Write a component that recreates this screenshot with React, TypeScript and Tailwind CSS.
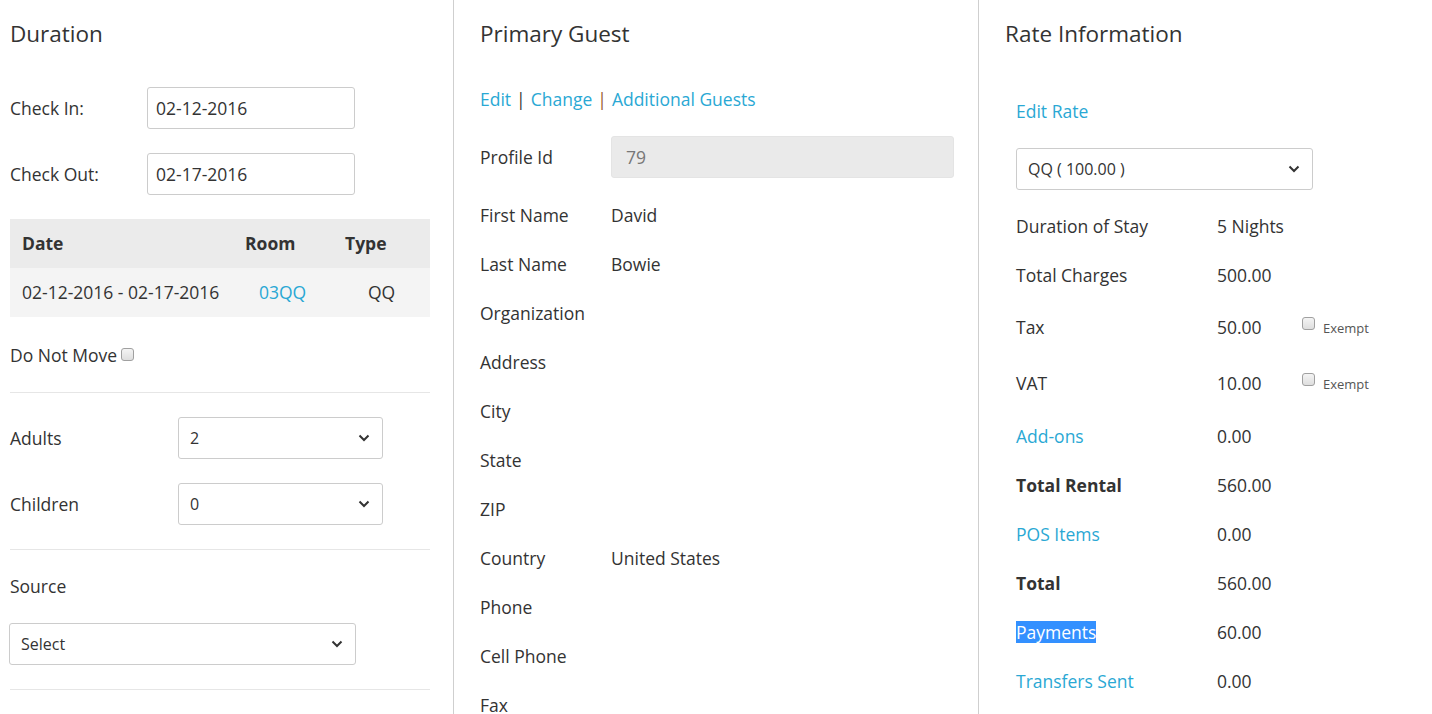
import React from 'react';

const Chevron = () => (
  <svg width="12" height="8" viewBox="0 0 12 8" className="shrink-0">
    <path d="M1.5 1.5l4.5 4.5 4.5-4.5" fill="none" stroke="#333" strokeWidth="2" />
  </svg>
);

const Checkbox = () => (
  <span className="inline-block w-[13px] h-[13px] rounded-[3px] border border-[#a0a0a0] bg-gradient-to-b from-[#f4f4f4] to-[#dedede]" />
);

const SelectBox = ({ value, className }: { value: string; className: string }) => (
  <div
    className={`flex items-center justify-between h-[42px] pl-[11px] pr-[12px] border border-[#cccccc] rounded-[3px] bg-white text-[16px] ${className}`}
  >
    <span>{value}</span>
    <Chevron />
  </div>
);

const Separator = () => <div className="h-px bg-[#e6e6e6]" />;

const guestRows: [string, string][] = [
  ['First Name', 'David'],
  ['Last Name', 'Bowie'],
  ['Organization', ''],
  ['Address', ''],
  ['City', ''],
  ['State', ''],
  ['ZIP', ''],
  ['Country', 'United States'],
  ['Phone', ''],
  ['Cell Phone', ''],
  ['Fax', ''],
];

const Link = ({ children }: { children: React.ReactNode }) => (
  <span className="text-[#2aa8d4]">{children}</span>
);

const App: React.FC = () => {
  return (
    <div className="flex h-[714px] overflow-hidden bg-white text-[#333] text-[17.5px] font-['Open_Sans',sans-serif]">
      {/* Duration */}
      <div className="w-[454px] shrink-0 border-r border-[#cfcfcf] pl-[10px] pr-[23px]">
        <h3 className="mt-[19px] h-[30px] leading-[30px] text-[22.5px]">Duration</h3>

        <div className="mt-[38px] flex items-center h-[42px]">
          <span className="w-[137px]">Check In:</span>
          <div className="w-[208px] h-[42px] border border-[#cccccc] rounded-[3px] flex items-center pl-[8px]">02-12-2016</div>
        </div>
        <div className="mt-[24px] flex items-center h-[42px]">
          <span className="w-[137px]">Check Out:</span>
          <div className="w-[208px] h-[42px] border border-[#cccccc] rounded-[3px] flex items-center pl-[8px]">02-17-2016</div>
        </div>

        <div className="mt-[24px]">
          <div className="flex items-center h-[49px] bg-[#ebebeb] font-bold">
            <span className="w-[223px] pl-[12px]">Date</span>
            <span className="w-[100px] pl-[12px]">Room</span>
            <span className="pl-[12px]">Type</span>
          </div>
          <div className="flex items-center h-[49px] bg-[#f4f4f4]">
            <span className="w-[223px] pl-[12px]">02-12-2016 - 02-17-2016</span>
            <span className="w-[100px] pl-[26px]"><Link>03QQ</Link></span>
            <span className="pl-[35px]">QQ</span>
          </div>
        </div>

        <div className="mt-[26px] h-[24px] flex items-center">
          <span>Do Not Move</span>
          <span className="ml-[4px] -mt-[2px] flex"><Checkbox /></span>
        </div>

        <div className="mt-[25px]"><Separator /></div>

        <div className="mt-[24px] flex items-center h-[42px]">
          <span className="w-[168px]">Adults</span>
          <SelectBox value="2" className="w-[205px]" />
        </div>
        <div className="mt-[24px] flex items-center h-[42px]">
          <span className="w-[168px]">Children</span>
          <SelectBox value="0" className="w-[205px]" />
        </div>

        <div className="mt-[24px]"><Separator /></div>

        <div className="mt-[24px] h-[24px] flex items-center">Source</div>
        <SelectBox value="Select" className="mt-[25px] -ml-px w-[347px]" />

        <div className="mt-[24px]"><Separator /></div>
      </div>

      {/* Primary Guest */}
      <div className="w-[525px] shrink-0 border-r border-[#cfcfcf] pl-[26px] pr-[24px]">
        <h3 className="mt-[19px] h-[30px] leading-[30px] text-[22.5px]">Primary Guest</h3>

        <div className="mt-[38px] h-[24px] flex items-center">
          <Link>Edit</Link>
          <span className="mx-[5px] text-[#333]">|</span>
          <Link>Change</Link>
          <span className="mx-[5px] text-[#9a5a2e]">|</span>
          <Link>Additional Guests</Link>
        </div>

        <div className="mt-[25px] flex items-center h-[42px]">
          <span className="w-[131px]">Profile Id</span>
          <div className="flex-1 h-[42px] rounded-[3px] border border-[#e4e4e4] bg-[#eaeaea] flex items-center pl-[14px] text-[#777]">79</div>
        </div>

        <div className="mt-[13px]">
          {guestRows.map(([label, value]) => (
            <div key={label} className="flex items-center h-[49px]">
              <span className="w-[131px]">{label}</span>
              <span>{value}</span>
            </div>
          ))}
        </div>
      </div>

      {/* Rate Information */}
      <div className="flex-1 pl-[26px]">
        <h3 className="mt-[19px] h-[30px] leading-[30px] text-[22.5px]">Rate Information</h3>

        <div className="pl-[11px]">
          <div className="mt-[50px] h-[24px] flex items-center"><Link>Edit Rate</Link></div>

          <SelectBox value="QQ ( 100.00 )" className="mt-[25px] w-[297px]" />

          <div className="mt-[12px]">
            <div className="flex items-center h-[49px]">
              <span className="w-[201px]">Duration of Stay</span>
              <span>5 Nights</span>
            </div>
            <div className="flex items-center h-[49px]">
              <span className="w-[201px]">Total Charges</span>
              <span>500.00</span>
            </div>
            <div className="flex items-center h-[54px]">
              <span className="w-[201px]">Tax</span>
              <span className="w-[85px]">50.00</span>
              <span className="-mt-[7px] flex"><Checkbox /></span>
              <span className="ml-[8px] mt-[3px] text-[13px] text-[#555]">Exempt</span>
            </div>
            <div className="flex items-center h-[58px]">
              <span className="w-[201px]">VAT</span>
              <span className="w-[85px]">10.00</span>
              <span className="-mt-[7px] flex"><Checkbox /></span>
              <span className="ml-[8px] mt-[3px] text-[13px] text-[#555]">Exempt</span>
            </div>
            <div className="flex items-center h-[49px]">
              <span className="w-[201px]"><Link>Add-ons</Link></span>
              <span>0.00</span>
            </div>
            <div className="flex items-center h-[49px]">
              <span className="w-[201px] font-bold">Total Rental</span>
              <span>560.00</span>
            </div>
            <div className="flex items-center h-[49px]">
              <span className="w-[201px]"><Link>POS Items</Link></span>
              <span>0.00</span>
            </div>
            <div className="flex items-center h-[49px]">
              <span className="w-[201px] font-bold">Total</span>
              <span>560.00</span>
            </div>
            <div className="flex items-center h-[49px]">
              <span className="w-[201px]">
                <span className="bg-[#3390ff] text-white leading-[22px] inline-block">Payments</span>
              </span>
              <span>60.00</span>
            </div>
            <div className="flex items-center h-[49px]">
              <span className="w-[201px]"><Link>Transfers Sent</Link></span>
              <span>0.00</span>
            </div>
          </div>
        </div>
      </div>
    </div>
  );
};

export default App;
